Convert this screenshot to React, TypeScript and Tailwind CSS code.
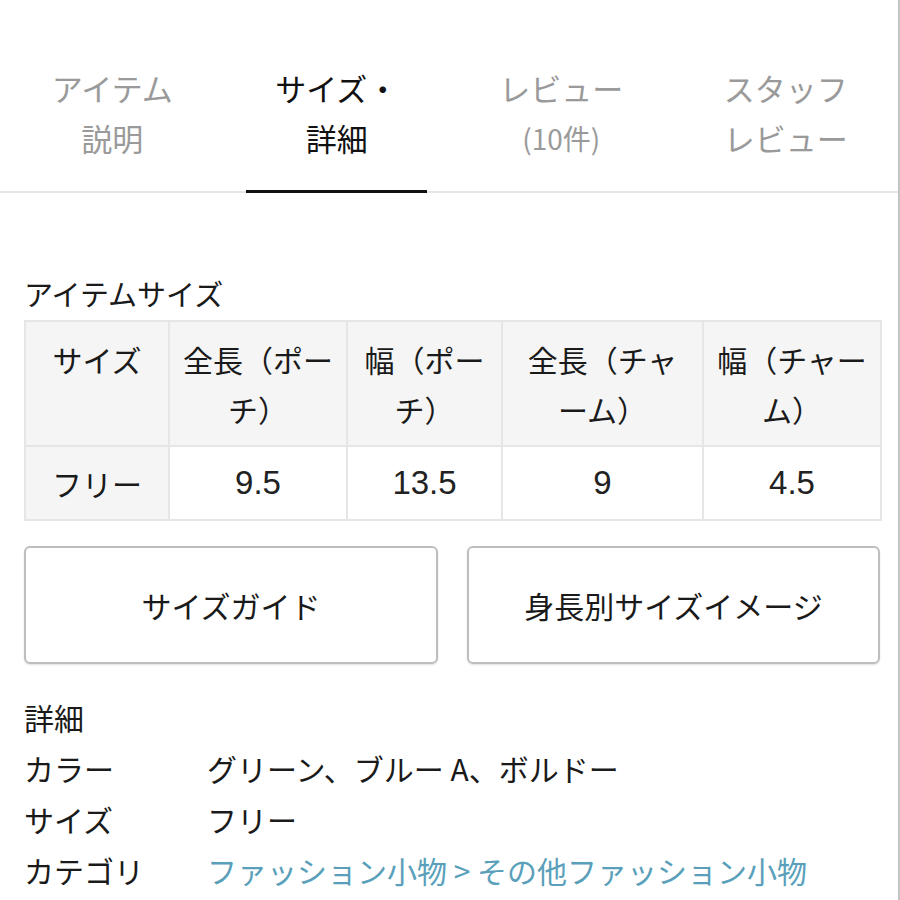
const FONT = "font-['Noto_Sans_CJK_JP','Noto_Sans',sans-serif]"

const TABS = [
  { lines: ['アイテム', '説明'], active: false },
  { lines: ['サイズ・', '詳細'], active: true },
  { lines: ['レビュー', '(10件)'], active: false },
  { lines: ['スタッフ', 'レビュー'], active: false },
]

const HEADERS = ['サイズ', '全長（ポーチ）', '幅（ポーチ）', '全長（チャーム）', '幅（チャーム）']
const VALUES = ['9.5', '13.5', '9', '4.5']
const COL_WIDTHS = ['w-[144px]', 'w-[178px]', 'w-[155px]', 'w-[201px]', 'w-[178px]']

const DETAILS = [
  { label: 'カラー', value: 'グリーン、ブルー A、ボルドー' },
  { label: 'サイズ', value: 'フリー' },
]

export default function App() {
  return (
    <div className={`${FONT} w-[900px] h-[900px] bg-white text-[#1a1a1a] overflow-hidden border-r-2 border-[#c4c4c4]`}>
      {/* タブ */}
      <div className="grid grid-cols-4 border-b-2 border-[#e6e6e6] pt-[63px]">
        {TABS.map((tab) => (
          <div key={tab.lines[0]} className="flex flex-col items-center">
            <div
              className={`flex flex-col items-center text-[31px] leading-[50px] pb-[27px] ${
                tab.active ? 'text-[#111]' : 'text-[#9a9a9a]'
              }`}
            >
              {tab.lines.map((l) => (
                <span key={l} className={l.startsWith('(') ? 'text-[28px]' : ''}>
                  {l}
                </span>
              ))}
            </div>
            <div className={`h-[3px] -mb-[2px] w-[181px] ${tab.active ? 'bg-[#111]' : 'bg-transparent'}`} />
          </div>
        ))}
      </div>

      <div className="pl-[24px] pt-[80px]">
        {/* アイテムサイズ */}
        <p className="text-[29px] leading-[40px] mb-[7px]">アイテムサイズ</p>
        <table className="table-fixed border-collapse w-[856px] text-[30px] leading-[50px]">
          <colgroup>
            {COL_WIDTHS.map((w, i) => (
              <col key={i} className={w} />
            ))}
          </colgroup>
          <thead>
            <tr>
              {HEADERS.map((h) => (
                <th
                  key={h}
                  className="border-2 border-[#e6e6e6] bg-[#f5f5f5] font-normal align-top px-[12px] pt-[12px] pb-[11px] h-[125px] text-center"
                >
                  {h}
                </th>
              ))}
            </tr>
          </thead>
          <tbody>
            <tr>
              <td className="border-2 border-[#e6e6e6] bg-[#f5f5f5] text-center px-[12px] py-[11px]">フリー</td>
              {VALUES.map((v, i) => (
                <td
                  key={i}
                  className="border-2 border-[#e6e6e6] bg-white text-center px-[12px] py-[11px] text-[33px] text-[#222] font-['Liberation_Sans','Noto_Sans_CJK_JP',sans-serif]"
                >
                  {v}
                </td>
              ))}
            </tr>
          </tbody>
        </table>

        {/* ボタン */}
        <div className="flex gap-[29px] mt-[25px]">
          <button className="flex-none w-[414px] h-[118px] rounded-[6px] border-2 border-[#bdbdbd] shadow-[0_1px_2px_rgba(0,0,0,0.12)] text-[30px] text-[#1a1a1a]">
            サイズガイド
          </button>
          <button className="flex-none w-[413px] h-[118px] rounded-[6px] border-2 border-[#bdbdbd] shadow-[0_1px_2px_rgba(0,0,0,0.12)] text-[30px] text-[#1a1a1a]">
            身長別サイズイメージ
          </button>
        </div>

        {/* 詳細 */}
        <div className="mt-[28px] text-[30px] leading-[51px]">
          <p>詳細</p>
          {DETAILS.map((d) => (
            <div key={d.label} className="flex">
              <span className="w-[183px]">{d.label}</span>
              <span>{d.value}</span>
            </div>
          ))}
          <div className="flex">
            <span className="w-[183px]">カテゴリ</span>
            <span className="text-[#5aa0ba]">ファッション小物 &gt; その他ファッション小物</span>
          </div>
        </div>
      </div>
    </div>
  )
}
